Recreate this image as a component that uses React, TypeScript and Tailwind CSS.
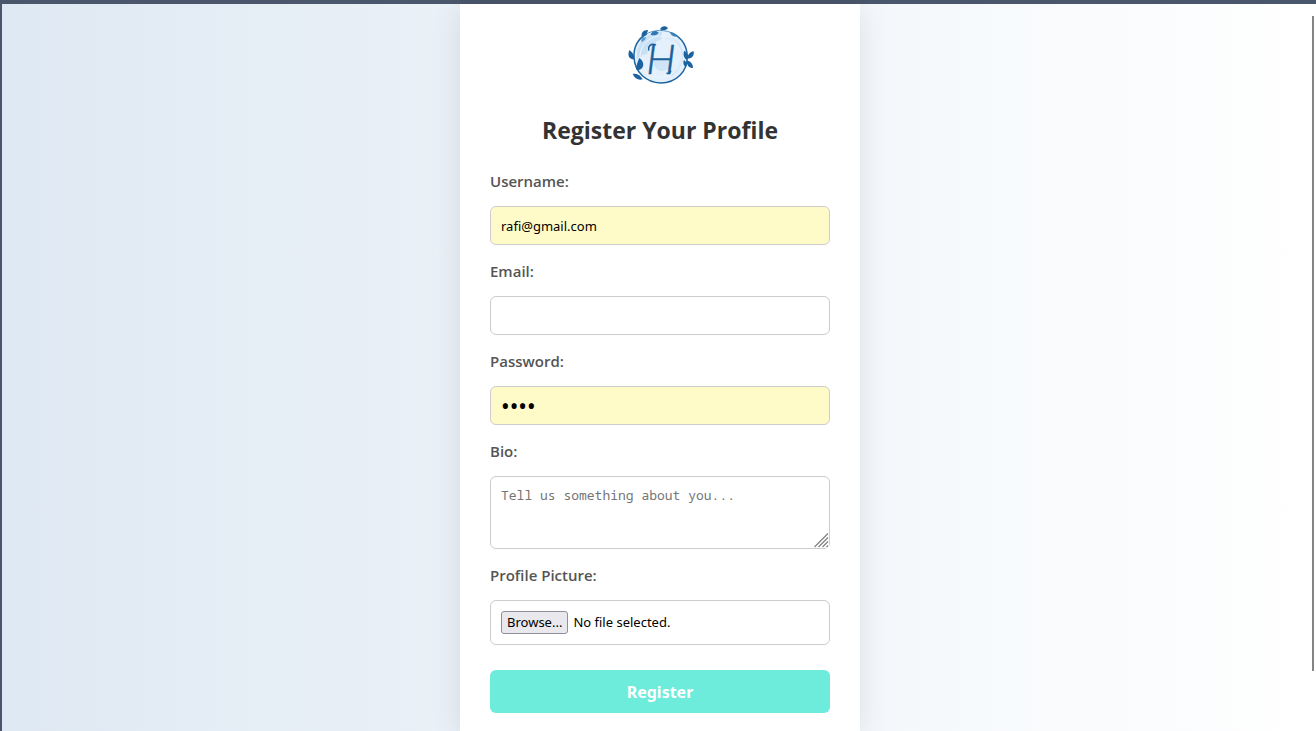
import type { ReactNode } from "react";

const fieldBox = "w-full rounded-md border border-[#cccccc] px-[10px]";
const fieldFont = "font-['Noto_Sans','Open_Sans',sans-serif] text-black";

function Logo() {
  return (
    <svg viewBox="48 42 204 183" className="h-[61px] w-[68px]" role="img" aria-label="H">
      <circle cx="152" cy="140" r="79" fill="#e4f0fb" />
      <path
        d="M82 118 C92 84 122 66 158 64 C150 76 160 84 150 92 C138 88 134 100 142 106 C130 116 122 104 112 116 C118 130 108 136 98 134 C92 146 84 140 80 148 Z"
        fill="#c9e1f6"
      />
      <path d="M130 152 C148 142 166 150 186 144 C192 160 178 180 160 182 C142 184 132 172 130 152 Z" fill="#cfe4f7" />
      <path d="M168 82 C198 86 216 110 216 138 C214 164 202 184 184 196" fill="none" stroke="#d0e5f7" strokeWidth="7" />
      <circle cx="152" cy="140" r="62" fill="none" stroke="#eef6fd" strokeWidth="3" />
      <path
        d="M110 72 C84 86 71 112 72 142 C74 188 110 218 152 219 C200 218 232 184 232 140 C231 108 214 84 190 71"
        fill="none"
        stroke="#1d66a3"
        strokeWidth="4.5"
      />
      <path d="M106 74 C130 58 166 56 196 74" fill="none" stroke="#3c81b9" strokeWidth="2.5" />
      <g fill="#1a62a0">
        <path d="M96 82 C92 70 98 60 114 60 C112 72 106 76 96 82 Z" />
        <path d="M94 96 C92 84 100 80 108 82 C106 90 102 94 94 96 Z" fill="#5a99cb" />
        <path d="M122 74 C126 62 138 60 146 68 C140 78 130 76 122 74 Z" fill="#2f78b4" />
        <path d="M150 58 C154 48 166 46 174 54 C168 62 158 62 150 58 Z" />
        <path d="M180 66 C186 66 196 68 198 80 C190 80 182 76 180 66 Z" fill="#3c81b9" />
        <path d="M72 148 C56 148 52 136 58 120 C68 128 74 134 72 148 Z" />
        <path d="M78 178 C80 164 82 156 88 144 C102 154 104 170 92 178 C88 181 82 181 78 178 Z" />
        <path d="M68 192 C80 190 92 196 98 208 C86 212 74 206 68 192 Z" />
        <path d="M232 146 C232 134 240 126 251 124 C253 138 246 146 232 146 Z" />
        <path d="M230 150 C220 142 219 130 223 122 C232 128 234 138 230 150 Z" />
        <path d="M230 152 C240 152 249 160 249 174 C237 174 230 166 230 152 Z" />
        <path d="M228 172 C220 166 218 158 222 150 C230 156 232 164 228 172 Z" />
      </g>
      <text
        x="153"
        y="192"
        textAnchor="middle"
        fontSize="126"
        fontStyle="italic"
        fill="#1b5f9b"
        stroke="#1b5f9b"
        strokeWidth="1.5"
        className="font-['Lato',sans-serif] font-light"
      >
        H
      </text>
      <path d="M116 120 C114 108 122 100 136 104" fill="none" stroke="#1b5f9b" strokeWidth="4.5" strokeLinecap="round" />
      <path d="M171 190 C176 191 180 188 182 184" fill="none" stroke="#1b5f9b" strokeWidth="4.5" strokeLinecap="round" />
    </svg>
  );
}

function Field({ id, label, children }: { id: string; label: string; children: ReactNode }) {
  return (
    <div className="mb-4 flex flex-col">
      <label htmlFor={id} className="mb-[14px] text-[15px] leading-[21px] font-semibold text-[#555555]">
        {label}
      </label>
      {children}
    </div>
  );
}

export default function App() {
  return (
    <div className="relative flex min-h-screen justify-center border-t-4 border-l-2 border-[#4a566b] bg-linear-to-r/srgb from-[#dfe9f3] to-white pl-0.5 font-['Open_Sans','Noto_Sans',sans-serif]">
      <main className="w-full max-w-[400px] bg-white px-[30px] pt-5 shadow-[0_4px_30px_rgba(0,0,0,0.1)]">
        <div className="flex justify-center">
          <Logo />
        </div>
        <h1 className="mt-[29px] mb-[25px] text-center text-[23px] leading-8 font-bold text-[#333333]">Register Your Profile</h1>
        <form onSubmit={(e) => e.preventDefault()}>
          <Field id="username" label="Username:">
            <input id="username" type="text" defaultValue="rafi@gmail.com" className={`${fieldBox} ${fieldFont} h-[39px] bg-[#fffbc8] text-[13px]`} />
          </Field>
          <Field id="email" label="Email:">
            <input id="email" type="email" className={`${fieldBox} ${fieldFont} h-[39px] bg-white text-[13px]`} />
          </Field>
          <Field id="password" label="Password:">
            <input id="password" type="password" defaultValue="rafi" className={`${fieldBox} ${fieldFont} h-[39px] bg-[#fffbc8] text-[23px]`} />
          </Field>
          <Field id="bio" label="Bio:">
            <div className="relative">
              <textarea
                id="bio"
                placeholder="Tell us something about you..."
                className={`${fieldBox} block h-[73px] resize-y bg-white py-[9px] font-['Noto_Sans_Mono','DejaVu_Sans_Mono',monospace] text-[13px] leading-[18px] text-black placeholder:text-[#757575]`}
              />
              <svg viewBox="0 0 15 15" className="pointer-events-none absolute right-px bottom-px size-[15px]" aria-hidden="true">
                <rect width="15" height="15" rx="3" fill="white" />
                <path d="M0.5 14 L14 0.5 M4.5 14 L14 4.5 M8.5 14 L14 8.5 M12.5 14 L14 12.5" stroke="#808080" strokeWidth="1.2" />
              </svg>
            </div>
          </Field>
          <Field id="picture" label="Profile Picture:">
            <div className={`${fieldBox} ${fieldFont} relative flex h-[45px] items-center gap-[5px] bg-white text-[13px]`}>
              <span className="rounded-[3px] border border-[#8f8f9d] bg-[#e9e9ed] px-[5px] leading-[21px]">Browse...</span>
              <span>No file selected.</span>
              <input id="picture" type="file" className="absolute inset-0 w-full cursor-pointer opacity-0" />
            </div>
          </Field>
          <button
            type="submit"
            className="mt-[9px] mb-5 h-[43px] w-full rounded-md bg-[#6debdb] font-['Noto_Sans',sans-serif] text-base font-bold text-white"
          >
            Register
          </button>
        </form>
      </main>
      <div className="absolute top-3 right-[2px] h-[655px] w-[2px] bg-[#858585]" />
    </div>
  );
}
